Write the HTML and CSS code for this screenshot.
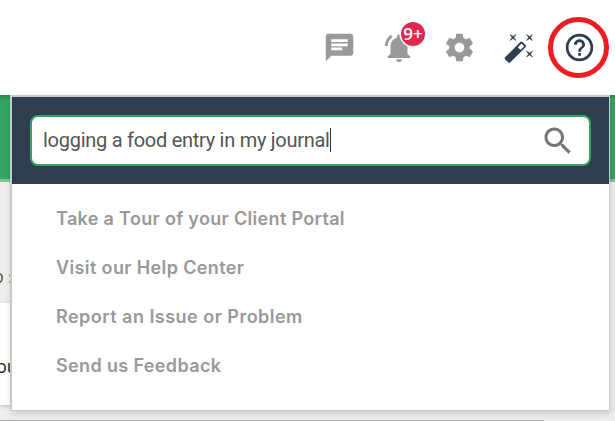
FILE: index.html
```html
<!DOCTYPE html>
<html lang="en">
<head>
<meta charset="utf-8">
<title>Client Portal</title>
<link rel="stylesheet" href="styles.css">
</head>
<body>
<header class="toolbar">
  <svg class="icon" viewBox="0 0 24 24"><path d="M20 2H4c-1.100 0-2 .9-2 2v18l4-4h14c1.100 0 2-.9 2-2V4c0-1.100-.9-2-2-2zM6 9h12v2H6V9zm8 5H6v-2h8v2zm4-6H6V6h12v2z"/></svg>
  <div class="alerts">
    <svg class="icon bell" viewBox="0 0 24 24"><path d="M7.580 4.080L6.150 2.650C3.750 4.480 2.170 7.300 2.030 10.500h2c.15-2.650 1.510-4.970 3.550-6.420zM18 11c0-3.070-1.640-5.640-4.500-6.320V4c0-.83-.67-1.500-1.500-1.500s-1.500.67-1.500 1.500v.68C7.630 5.360 6 7.920 6 11v5l-2 2v1h16v-1l-2-2v-5zm-6 11c.14 0 .27-.01.4-.04.65-.14 1.180-.58 1.440-1.180.1-.24.15-.5.15-.78h-4c.01 1.100.9 2 2.010 2z"/></svg>
    <span class="badge">9+</span>
  </div>
  <svg class="icon" viewBox="0 0 24 24"><path d="M19.430 12.980c.04-.32.07-.64.07-.98s-.03-.66-.07-.98l2.110-1.650c.19-.15.24-.42.12-.64l-2-3.460c-.12-.22-.39-.3-.61-.22l-2.490 1c-.52-.4-1.080-.73-1.690-.98l-.38-2.650C14.460 2.180 14.250 2 14 2h-4c-.25 0-.46.18-.49.42l-.38 2.650c-.61.25-1.170.59-1.690.98l-2.490-1c-.23-.09-.49 0-.61.22l-2 3.460c-.13.22-.07.49.12.64l2.110 1.650c-.04.32-.07.65-.07.98s.03.66.07.98l-2.110 1.650c-.19.15-.24.42-.12.64l2 3.460c.12.22.39.3.61.22l2.490-1c.52.4 1.080.73 1.690.98l.38 2.650c.03.24.24.42.49.42h4c.25 0 .46-.18.49-.42l.38-2.650c.61-.25 1.170-.59 1.690-.98l2.490 1c.23.09.49 0 .61-.22l2-3.460c.12-.22.07-.49-.12-.64l-2.110-1.650zM12 15.500c-1.930 0-3.500-1.570-3.500-3.500s1.570-3.500 3.500-3.500 3.500 1.570 3.500 3.500-1.570 3.500-3.500 3.500z"/></svg>
  <svg class="wand" viewBox="0 0 30 30"><path fill-rule="evenodd" d="M1.100 23.300L16 8.300Q17.400 6.900 18.800 8.300L21.300 10.800Q22.700 12.200 21.300 13.600L6.400 28.300Q5.300 29.400 4.200 28.300L1.100 25.400Q.1 24.300 1.100 23.300zM13.800 13.300L16.500 16 20.200 12.300 17.500 9.600z"/><path class="sparkle" d="M6 .5l3 2 3-2-2 3 2 3-3-2-3 2 2-3zM22.500.5l3 2 3-2-2 3 2 3-3-2-3 2 2-3zM22.500 17l3 2 3-2-2 3 2 3-3-2-3 2 2-3z"/></svg>
  <div class="help-ring"><svg class="icon help" viewBox="0 0 24 24"><path d="M11 18h2v-2h-2v2zm1-16C6.480 2 2 6.480 2 12s4.480 10 10 10 10-4.480 10-10S17.520 2 12 2zm0 18c-4.410 0-8-3.590-8-8s3.590-8 8-8 8 3.590 8 8-3.590 8-8 8zm0-14c-2.210 0-4 1.790-4 4h2c0-1.100.9-2 2-2s2 .9 2 2c0 2-3 1.750-3 5h2c0-2.250 3-2.500 3-5 0-2.210-1.790-4-4-4z"/></svg></div>
</header>
<main class="page">
  <div class="banner"></div>
  <div class="intro">o s</div>
  <div class="card">ou</div>
  <div class="next-card"></div>
</main>
<section class="menu">
  <div class="search-panel">
    <div class="search-box">
      <span class="query">logging a food entry in my journal</span><span class="caret"></span>
      <svg class="search-icon" viewBox="0 0 24 24"><path d="M15.500 14h-.79l-.28-.27C15.410 12.590 16 11.110 16 9.500 16 5.910 13.090 3 9.500 3S3 5.910 3 9.500 5.910 16 9.500 16c1.610 0 3.090-.59 4.230-1.570l.27.28v.79l5 4.990L20.490 19l-4.990-5zm-6 0C7.010 14 5 11.990 5 9.500S7.010 5 9.500 5 14 7.010 14 9.500 11.990 14 9.500 14z"/></svg>
    </div>
  </div>
  <nav class="links">
    <a class="tour">Take a Tour of your Client Portal</a>
    <a class="center">Visit our Help Center</a>
    <a class="report">Report an Issue or Problem</a>
    <a class="feedback">Send us Feedback</a>
  </nav>
</section>
</body>
</html>
```
FILE: styles.css
```css
* { box-sizing: border-box; }
body {
  margin: 0;
  width: 615px;
  height: 421px;
  overflow: hidden;
  position: relative;
  background: #eee;
  font-family: Roboto, sans-serif;
}
svg { display: block; flex: none; }
.toolbar {
  height: 95px;
  background: #fff;
  display: flex;
  align-items: center;
  padding-left: 323px;
}
.icon { width: 33px; height: 33px; fill: #999; }
.alerts { position: relative; margin: 0 27px 0 26px; }
.bell { width: 34px; height: 34px; }
.badge {
  position: absolute;
  left: 19px;
  top: -9px;
  width: 24px;
  height: 24px;
  border-radius: 50%;
  background: #e0294f;
  box-shadow: 0 0 0 1.5px #fff;
  color: #fff;
  font: 600 17px/24px "Open Sans", sans-serif;
  text-align: center;
}
.wand { width: 30px; height: 30px; fill: #2d3e50; margin: 2px 0 0 28px; }
.sparkle { stroke: #2d3e50; stroke-width: .5; }
.help-ring {
  width: 61px;
  height: 61px;
  border: 5px solid #ee1c25;
  border-radius: 50%;
  margin-left: 14px;
  display: flex;
  align-items: center;
  justify-content: center;
}
.help { fill: #2d3e50; margin-left: 2px; }
.banner {
  height: 87px;
  border-bottom: 3px solid #7fc39b;
  background: linear-gradient(#278551, #33a563 5px);
}
.intro {
  height: 121px;
  padding-top: 83px;
  text-indent: -7px;
  color: #555;
  font: 18px/22px "Open Sans", sans-serif;
}
.card {
  width: 544px;
  height: 102px;
  padding: 52px 0 0 0;
  text-indent: -4px;
  background: #fff;
  box-shadow: 0 1px 4px #bbb;
  color: #222;
  font: 18px/22px "Open Sans", sans-serif;
}
.next-card { width: 544px; height: 1px; margin-top: 15px; background: #b3b3b3; }
.menu {
  position: absolute;
  left: 10px;
  top: 95px;
  width: 600px;
  height: 316px;
  border: solid #c9c9c9;
  border-width: 2px 1px 1px 2px;
  border-radius: 0 0 2px 2px;
  background: #fff;
  box-shadow: 1px 3px 7px rgba(0, 0, 0, .14);
}
.search-panel { height: 87px; padding: 18px 18px 0; background: #2d3e50; }
.search-box {
  height: 51px;
  width: 561px;
  border: 2px solid #33a563;
  border-radius: 8px;
  background: #fff;
  display: flex;
  align-items: center;
  padding-left: 11px;
}
.query {
  color: #555;
  font-size: 20px;
  line-height: 24px;
  letter-spacing: -0.27px;
  margin-bottom: 2px;
  white-space: nowrap;
}
.caret { width: 1px; height: 24px; margin-bottom: 1px; background: #333; }
.search-icon { width: 36px; height: 36px; margin: 0 13px 0 auto; fill: #757575; }
.links { display: grid; grid-auto-rows: 49px; padding: 10px 0 0 44px; }
.links a {
  color: #999;
  font: 600 18px/49px Inter, sans-serif;
  white-space: nowrap;
  justify-self: start;
}
.tour { letter-spacing: .33px; }
.center { letter-spacing: .38px; }
.report { letter-spacing: .48px; }
.feedback { letter-spacing: .36px; }
```
